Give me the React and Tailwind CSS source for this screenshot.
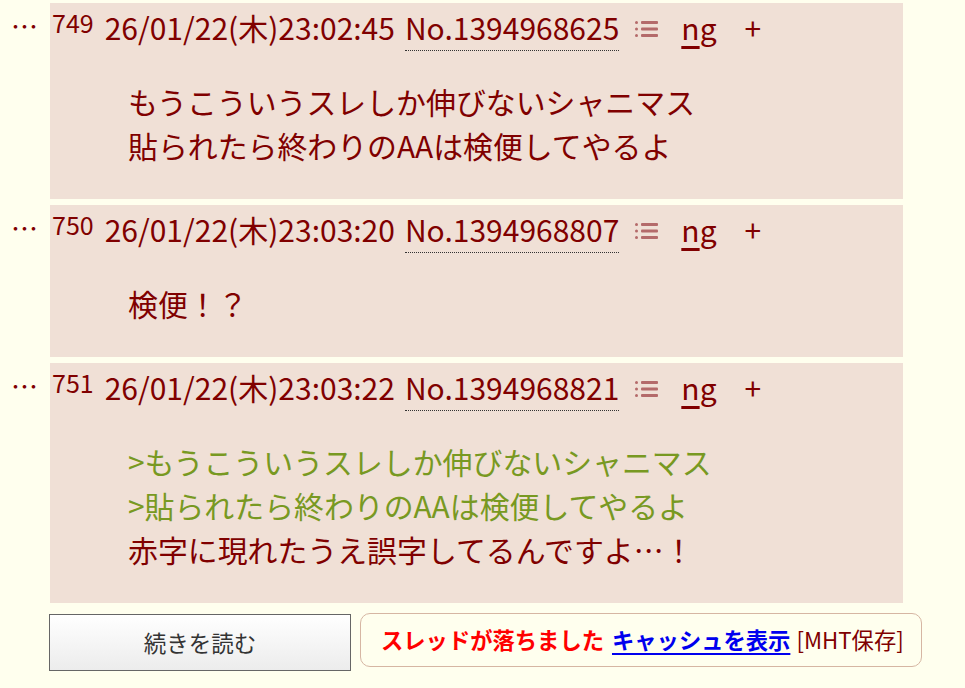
const posts = [
  {
    no: 749,
    date: '26/01/22(木)23:02:45',
    id: '1394968625',
    lines: [
      { text: 'もうこういうスレしか伸びないシャニマス' },
      { text: '貼られたら終わりのAAは検便してやるよ' },
    ],
  },
  {
    no: 750,
    date: '26/01/22(木)23:03:20',
    id: '1394968807',
    lines: [{ text: '検便！？' }],
  },
  {
    no: 751,
    date: '26/01/22(木)23:03:22',
    id: '1394968821',
    lines: [
      { text: '>もうこういうスレしか伸びないシャニマス', quote: true },
      { text: '>貼られたら終わりのAAは検便してやるよ', quote: true },
      { text: '赤字に現れたうえ誤字してるんですよ…！' },
    ],
  },
];

const ListIcon = () => (
  <svg width="23" height="18" viewBox="0 0 23 18" className="text-[#b46a6a]">
    <rect x="0" y="1" width="3" height="3" rx="1.5" fill="currentColor" />
    <rect x="0" y="7.5" width="3" height="3" rx="1.5" fill="currentColor" />
    <rect x="0" y="14" width="3" height="3" rx="1.5" fill="currentColor" />
    <rect x="6" y="1" width="17" height="3" rx="1" fill="currentColor" />
    <rect x="6" y="7.5" width="17" height="3" rx="1" fill="currentColor" />
    <rect x="6" y="14" width="17" height="3" rx="1" fill="currentColor" />
  </svg>
);

const Post = ({ post }) => (
  <div className="flex">
    <div className="w-[50px] shrink-0 pl-[11px] pt-[3px] text-[27px] leading-[40px] text-[#800000]">…</div>
    <div className="w-[853px] bg-[#f0e0d6] pt-[1px] pb-[32px]">
      <div className="flex items-start h-[46px] text-[#800000]">
        <span className="ml-[2px] mt-[4px] text-[25px] leading-[28px]">{post.no}</span>
        <span className="ml-[11px] text-[30px] leading-[46px]">{post.date}</span>
        <span className="ml-[10px] text-[30px] leading-[46px] border-b border-dotted border-[#333] h-[47px]">
          No.{post.id}
        </span>
        <span className="ml-[16px] mt-[16px]">
          <ListIcon />
        </span>
        <span className="ml-[23px] text-[30px] leading-[46px]">
          <span className="underline decoration-[3px] underline-offset-[6px]">n</span>g
        </span>
        <span className="ml-[28px] text-[30px] leading-[46px]">+</span>
      </div>
      <div className="ml-[78px] mt-[29px] text-[29.9px] leading-[44px]">
        {post.lines.map((l, i) => (
          <div key={i} className={l.quote ? 'text-[#789922]' : 'text-[#800000]'}>
            {l.text}
          </div>
        ))}
      </div>
    </div>
  </div>
);

export default function App() {
  return (
    <div
      className="min-h-[688px] bg-[#ffffee] pt-[3px]"
      style={{ fontFamily: '"Noto Sans CJK JP", "Noto Sans", sans-serif' }}
    >
      <div className="flex flex-col gap-[6px]">
        {posts.map((p) => (
          <Post key={p.no} post={p} />
        ))}
      </div>
      <div className="flex items-start mt-[11px] ml-[49px]">
        <button className="w-[302px] h-[57px] border border-[#666] bg-gradient-to-b from-white to-[#ececec] text-[22.5px] text-[#333]">
          続きを読む
        </button>
        <div className="ml-[9px] w-[562px] h-[54px] -mt-[1px] rounded-[10px] border border-[#d6b6a3] flex items-center pl-[20px] text-[22.3px] whitespace-nowrap">
          <span className="font-bold text-[#ff0000]">スレッドが落ちました</span>
          <span className="ml-[8px] font-bold text-[#0000ee] underline underline-offset-[4px]">キャッシュを表示</span>
          <span className="ml-[6px] text-[#800000]">[MHT保存]</span>
        </div>
      </div>
    </div>
  );
}
